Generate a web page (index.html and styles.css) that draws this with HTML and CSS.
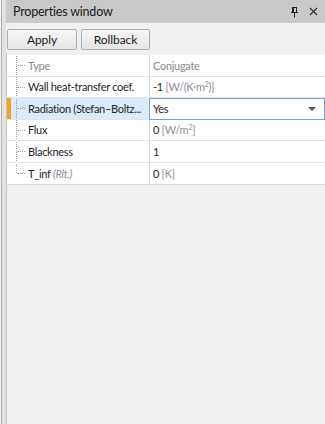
FILE: index.html
```html
<!DOCTYPE html>
<html>
<head>
<meta charset="utf-8">
<link rel="stylesheet" href="styles.css">
</head>
<body>
<div class="frame">
  <div class="panel">
    <div class="titlebar">
      <span class="title">Properties window</span>
      <span class="tb-icons">
        <svg class="pin" width="9" height="11" viewBox="0 0 9 11"><path d="M2 0.5h5M2.5 0.5v5M6.5 0.5v5M1 5.5h7M4.5 5.5v5" stroke="#222" stroke-width="1" fill="none"/><rect x="2.5" y="1" width="1.5" height="4.5" fill="#222"/></svg>
        <svg class="close" width="9" height="9" viewBox="0 0 9 9"><path d="M1 1L8 8M8 1L1 8" stroke="#333" stroke-width="1.2"/></svg>
      </span>
    </div>
    <div class="toolbar">
      <button class="btn btn-apply">Apply</button>
      <button class="btn btn-rollback">Rollback</button>
    </div>
    <div class="body">
      <div class="grid">
        <div class="row">
          <div class="marker"></div>
          <div class="name dim"><span class="tree"></span><span class="txt">Type</span></div>
          <div class="val dim"><span>Conjugate</span></div>
        </div>
        <div class="row">
          <div class="marker"></div>
          <div class="name"><span class="tree"></span><span class="txt">Wall heat-transfer coef.</span></div>
          <div class="val"><span>-1 <span class="unit">[W/(K·m<sup>2</sup>)]</span></span></div>
        </div>
        <div class="row sel">
          <div class="marker on"></div>
          <div class="name"><span class="tree"></span><span class="txt">Radiation (Stefan–Boltz...</span></div>
          <div class="val combo"><span>Yes</span><span class="arrow"></span></div>
        </div>
        <div class="row">
          <div class="marker"></div>
          <div class="name"><span class="tree"></span><span class="txt">Flux</span></div>
          <div class="val"><span>0 <span class="unit">[W/m<sup>2</sup>]</span></span></div>
        </div>
        <div class="row">
          <div class="marker"></div>
          <div class="name"><span class="tree"></span><span class="txt">Blackness</span></div>
          <div class="val"><span>1</span></div>
        </div>
        <div class="row last">
          <div class="marker"></div>
          <div class="name"><span class="tree end"></span><span class="txt">T_inf <i class="unit">(Rlt.)</i></span></div>
          <div class="val"><span>0 <span class="unit">[K]</span></span></div>
        </div>
      </div>
    </div>
  </div>
</div>
</body>
</html>
```
FILE: styles.css
```css
* { box-sizing: border-box; }
html, body { margin: 0; padding: 0; height: 100%; }
body {
  font-family: Lato, "Noto Sans", sans-serif;
  font-size: 11px;
  letter-spacing: -0.3px;
  color: #1e1e1e;
  background: #f0f0f0;
}
.frame {
  height: 424px;
  width: 325px;
  border-left: 1px solid #f2f2f2;
  background: #f0f0f0;
  display: flex;
}
.frame::before {
  content: "";
  flex: none;
  width: 4px;
  background: #e2e2e2;
  border-left: 1px solid #b0b0b0;
}
.panel {
  flex: 1;
  display: flex;
  flex-direction: column;
  min-width: 0;
}
.titlebar {
  height: 23px;
  background: #c9c9c9;
  display: flex;
  align-items: center;
  justify-content: space-between;
  padding: 0 7px 0 7px;
}
.title { font-size: 12.5px; letter-spacing: -0.2px; color: #1a1a1a; }
.tb-icons { display: flex; align-items: center; gap: 10px; }
.pin { margin-top: 1px; }
.toolbar {
  height: 30px;
  display: flex;
  align-items: center;
  gap: 4px;
  padding: 2px 0 0 1px;
}
.btn {
  font-family: inherit;
  font-size: 12px;
  letter-spacing: -0.1px;
  color: #1a1a1a;
  height: 21px;
  padding: 0;
  margin: 0;
  border: 1px solid #adadad;
  border-radius: 2px;
  background: linear-gradient(#f7f7f7, #e5e5e5);
}
.btn-apply { width: 70px; }
.btn-rollback { width: 69px; }
.body {
  flex: 1;
  padding-top: 2px;
  border-left: 1px solid #c4c4c4;
}
.grid {
  background: #fff;
  border-bottom: 1px solid #d8d8d8;
}
.row {
  display: flex;
  height: 21.5px;
  border-bottom: 1px solid #e3e3e3;
}
.row.last { border-bottom: none; }
.marker { width: 4px; flex: none; }
.marker.on { background: #f5a21b; }
.name {
  width: 139px;
  flex: none;
  border-right: 1px solid #d6d6d6;
  display: flex;
  align-items: center;
  white-space: nowrap;
  overflow: hidden;
  padding-left: 3px;
}
.txt { white-space: pre; }
.tree {
  width: 12px;
  align-self: stretch;
  margin-right: 2px;
  position: relative;
  flex: none;
}
.tree::before {
  content: "";
  position: absolute;
  left: 2px; top: -1px; bottom: -1px;
  border-left: 1px dotted #a0a0a0;
}
.tree::after {
  content: "";
  position: absolute;
  left: 3px; width: 8px; top: 50%;
  border-top: 1px dotted #a0a0a0;
}
.tree.end::before { bottom: 50%; }
.sel .name { background: #dbeafc; }
.val {
  flex: 1;
  display: flex;
  align-items: center;
  padding-left: 3px;
  white-space: pre;
  min-width: 0;
}
.dim { color: #8a8a8a; }
.unit { color: #8d8d99; }
sup { font-size: 7px; vertical-align: 4px; line-height: 0; }
.combo {
  border: 1px solid #6ca5dd;
  margin: 0 0 -1px -1px;
  padding-left: 3px;
  justify-content: space-between;
  padding-right: 8px;
}
.arrow {
  width: 0; height: 0;
  border-left: 4px solid transparent;
  border-right: 4px solid transparent;
  border-top: 4px solid #555;
}
```
